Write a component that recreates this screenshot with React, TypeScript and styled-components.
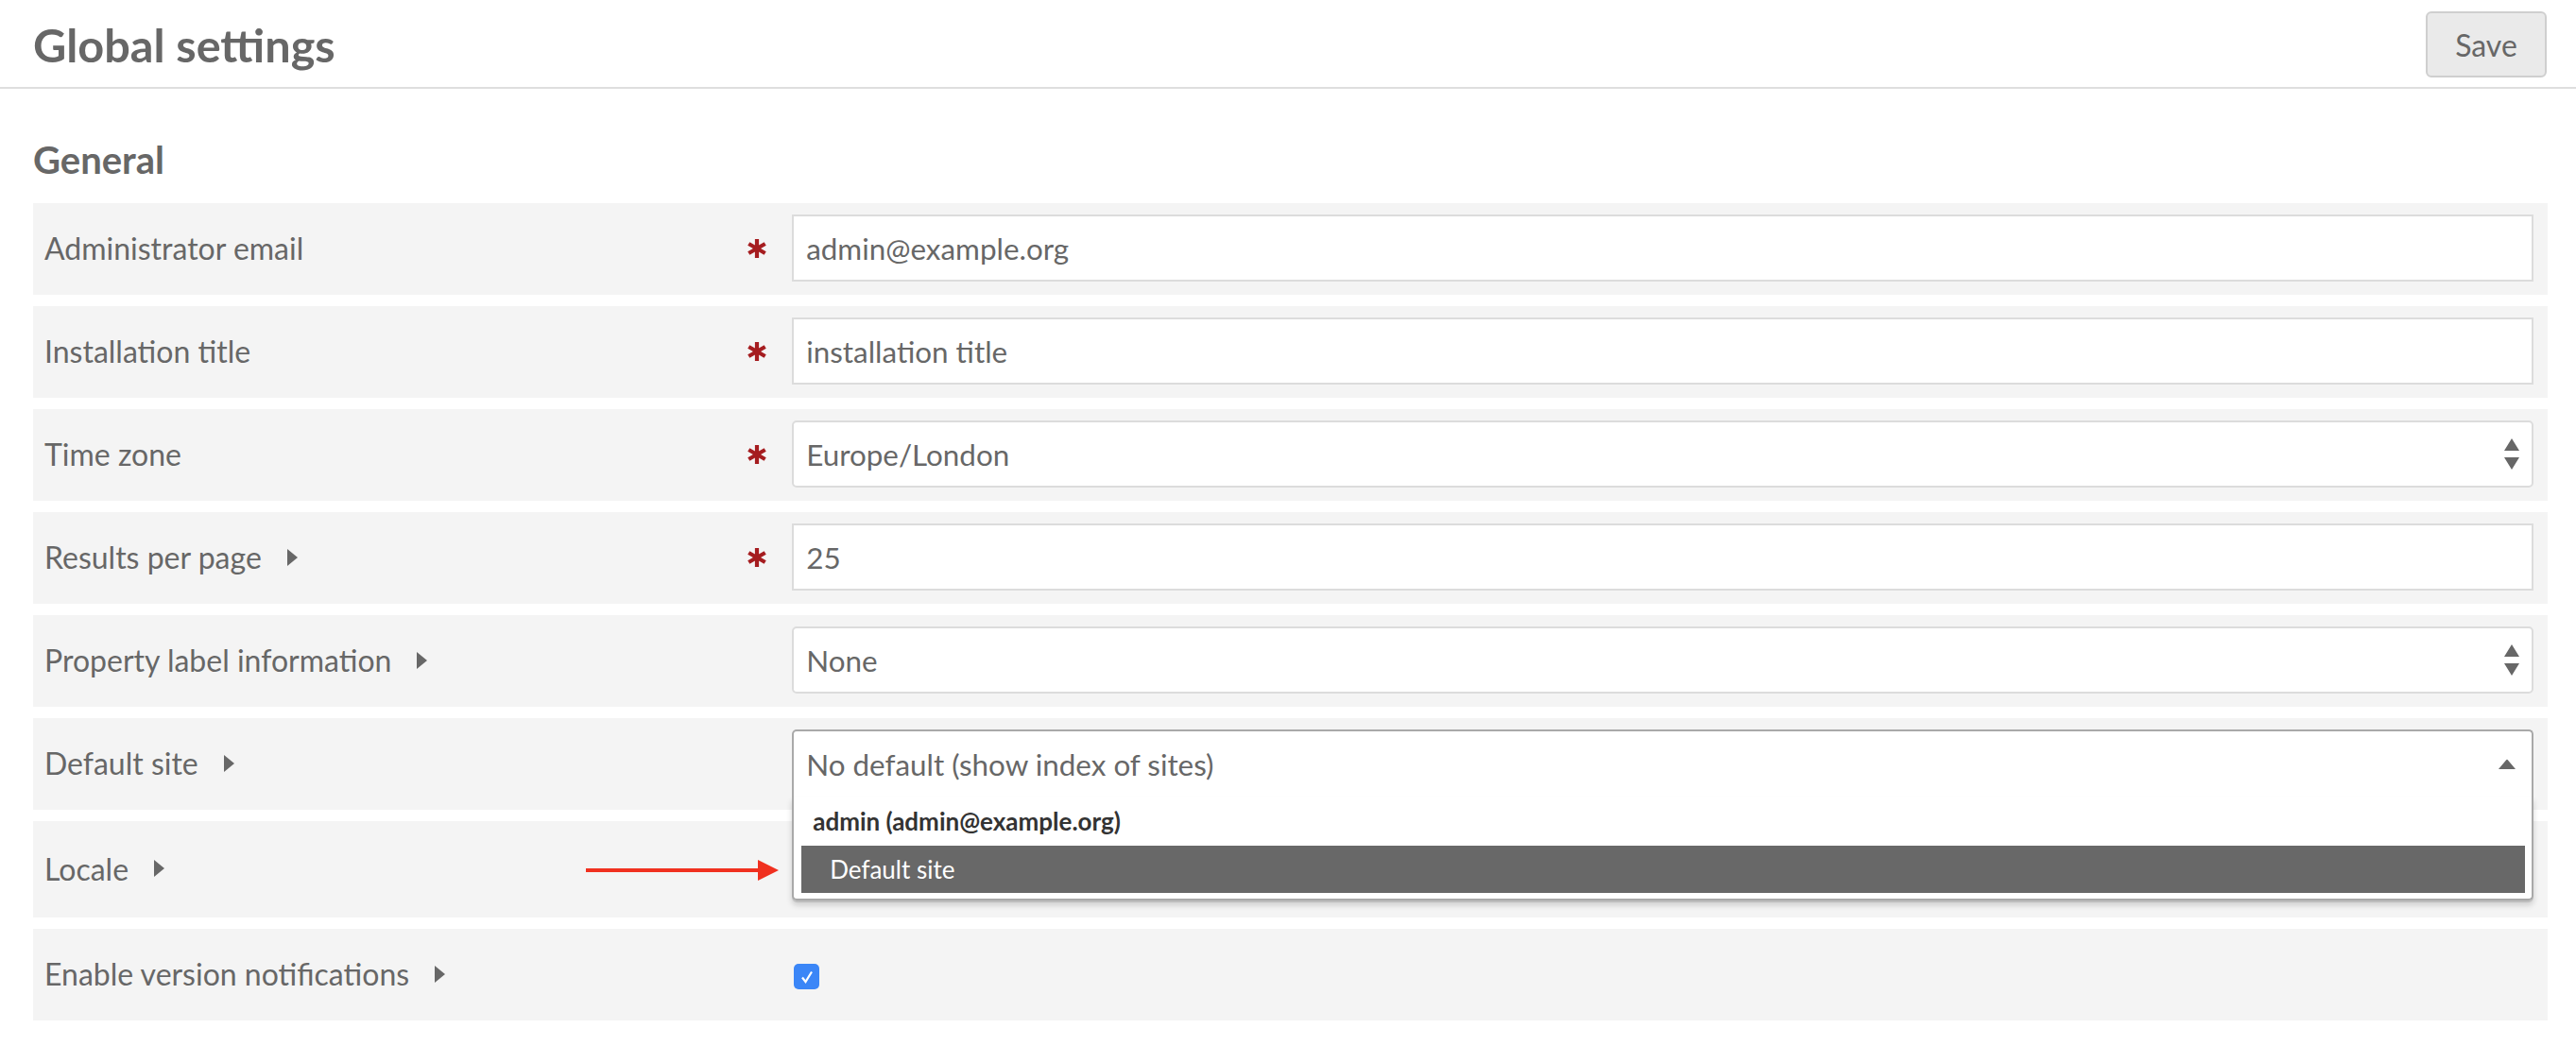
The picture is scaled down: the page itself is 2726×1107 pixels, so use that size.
import styled, { createGlobalStyle } from "styled-components"

const GlobalStyle = createGlobalStyle`
  html, body {
    margin: 0;
    padding: 0;
    background: #fff;
  }
  body {
    font-family: Lato, "Open Sans", "Liberation Sans", sans-serif;
    color: #676767;
  }
  * {
    box-sizing: border-box;
  }
`

// Header
const Header = styled.header`
  display: flex;
  align-items: center;
  justify-content: space-between;
  height: 94px;
  padding: 2px 31px 0 35px;
  border-bottom: 2px solid #dedede;
`
const Title = styled.h1`
  margin: 0;
  font-size: 48.6px;
  line-height: 1;
  font-weight: 700;
  color: #676767;
`
const SaveButton = styled.button`
  width: 128px;
  height: 70px;
  border: 2px solid #cfcfcf;
  border-radius: 6px;
  background: #eaeaea;
  color: #676767;
  font-family: inherit;
  font-size: 32px;
  cursor: pointer;
`

// Form
const Main = styled.main`
  padding: 0 30px 30px 35px;
`
const SectionTitle = styled.h2`
  margin: 55px 0 26px;
  font-size: 40px;
  line-height: 1;
  font-weight: 700;
  color: #676767;
`
const Field = styled.div<{ $tall?: boolean }>`
  position: relative;
  display: flex;
  align-items: center;
  min-height: ${p => (p.$tall ? 102 : 97)}px;
  margin-bottom: 12px;
  padding: 12px 15px 14px 12px;
  background: #f4f4f4;
`
const Meta = styled.div`
  flex: none;
  width: calc(30% + 1px);
  display: flex;
  align-items: center;
  padding-right: 26px;
`
const Label = styled.label`
  font-size: 32px;
  color: #676767;
`
const InfoCaret = styled.svg`
  margin-left: 27px;
  flex: none;
`
const Required = styled.svg`
  margin-left: auto;
  flex: none;
`
const Inputs = styled.div`
  flex: 1;
  position: relative;
`
const TextInput = styled.input`
  display: block;
  width: 100%;
  height: 71px;
  padding: 0 13px;
  border: 2px solid #dcdcdc;
  border-radius: 0;
  background: #fff;
  color: #676767;
  font-family: inherit;
  font-size: 31.4px;
  outline: none;
`
const SelectBox = styled.div<{ $open?: boolean }>`
  display: flex;
  align-items: center;
  justify-content: space-between;
  height: 71px;
  padding: 0 ${p => (p.$open ? 17 : 13)}px 0 13px;
  border: 2px solid ${p => (p.$open ? "#a9a9a9" : "#dcdcdc")};
  border-bottom-width: ${p => (p.$open ? 0 : 2)}px;
  border-radius: ${p => (p.$open ? "5px 5px 0 0" : "5px")};
  background: #fff;
  font-size: 31.4px;
  color: #676767;
`
const DropList = styled.div`
  position: absolute;
  top: 100%;
  left: 0;
  right: 0;
  z-index: 5;
  padding: 0 7px 6px 8px;
  background: #fff;
  border: 2px solid #a9a9a9;
  border-top: 0;
  border-radius: 0 0 5px 5px;
  box-shadow: 0 5px 6px rgba(0, 0, 0, 0.16);
`
const GroupLabel = styled.div`
  height: 52px;
  display: flex;
  align-items: center;
  padding-left: 12px;
  font-size: 26px;
  font-weight: 700;
  color: #333;
`
const Option = styled.div<{ $active?: boolean }>`
  height: 50px;
  display: flex;
  align-items: center;
  padding-left: 30px;
  font-size: 26px;
  color: ${p => (p.$active ? "#fff" : "#676767")};
  background: ${p => (p.$active ? "#686868" : "transparent")};
`
const CheckBox = styled.span`
  display: flex;
  align-items: center;
  justify-content: center;
  width: 27px;
  height: 27px;
  margin: 6px 0 0 2px;
  border-radius: 5px;
  background: #3b86f7;
`
const Annotation = styled.svg`
  position: absolute;
  left: 585px;
  top: 41px;
`

const Caret = () => (
  <InfoCaret width="11" height="18" viewBox="0 0 11 18">
    <path d="M0 0 L11 9 L0 18 Z" fill="#676767" />
  </InfoCaret>
)

const Asterisk = () => (
  <Required width="22" height="22" viewBox="-11 -11 22 22">
    <g stroke="#a51c1f" strokeWidth="4.2">
      <line x1="0" y1="-10" x2="0" y2="10" />
      <line x1="-8.7" y1="-5" x2="8.7" y2="5" />
      <line x1="-8.7" y1="5" x2="8.7" y2="-5" />
    </g>
  </Required>
)

const UpDown = () => (
  <svg width="16" height="33" viewBox="0 0 16 33">
    <path d="M0 13 L8 0 L16 13 Z M0 20 L16 20 L8 33 Z" fill="#676767" />
  </svg>
)

const CaretUp = () => (
  <svg width="18" height="11" viewBox="0 0 18 11">
    <path d="M0 11 L8 1.5 Q9 0 10 1.5 L18 11 Z" fill="#676767" />
  </svg>
)

interface IMeta {
  label: string
  required?: boolean
  info?: boolean
}

const FieldMeta: React.FC<IMeta> = ({ label, required, info }) => (
  <Meta>
    <Label>{label}</Label>
    {info && <Caret />}
    {required && <Asterisk />}
  </Meta>
)

const App = () => {
  return (
    <>
      <GlobalStyle />
      <Header>
        <Title>Global settings</Title>
        <SaveButton>Save</SaveButton>
      </Header>
      <Main>
        <SectionTitle>General</SectionTitle>

        <Field>
          <FieldMeta label="Administrator email" required />
          <Inputs>
            <TextInput defaultValue="admin@example.org" />
          </Inputs>
        </Field>

        <Field>
          <FieldMeta label="Installation title" required />
          <Inputs>
            <TextInput defaultValue="installation title" />
          </Inputs>
        </Field>

        <Field>
          <FieldMeta label="Time zone" required />
          <Inputs>
            <SelectBox>
              <span>Europe/London</span>
              <UpDown />
            </SelectBox>
          </Inputs>
        </Field>

        <Field>
          <FieldMeta label="Results per page" required info />
          <Inputs>
            <TextInput defaultValue="25" />
          </Inputs>
        </Field>

        <Field>
          <FieldMeta label="Property label information" info />
          <Inputs>
            <SelectBox>
              <span>None</span>
              <UpDown />
            </SelectBox>
          </Inputs>
        </Field>

        <Field>
          <FieldMeta label="Default site" info />
          <Inputs>
            <SelectBox $open>
              <span>No default (show index of sites)</span>
              <CaretUp />
            </SelectBox>
            <DropList>
              <GroupLabel>admin (admin@example.org)</GroupLabel>
              <Option $active>Default site</Option>
            </DropList>
          </Inputs>
        </Field>

        <Field $tall>
          <FieldMeta label="Locale" info />
          <Inputs>
            {/* hidden under the open dropdown above */}
            <SelectBox>
              <span />
              <UpDown />
            </SelectBox>
          </Inputs>
          <Annotation width="204" height="22" viewBox="0 0 204 22">
            <rect x="0" y="9" width="184" height="4" fill="#f0301f" />
            <path d="M182 0 L204 11 L182 22 Z" fill="#f0301f" />
          </Annotation>
        </Field>

        <Field>
          <FieldMeta label="Enable version notifications" info />
          <Inputs>
            <CheckBox>
              <svg width="16" height="16" viewBox="0 0 16 16">
                <path d="M3 8.5 L6.5 13 L13 2.5" stroke="#fff" strokeWidth="2.2" fill="none" />
              </svg>
            </CheckBox>
          </Inputs>
        </Field>
      </Main>
    </>
  )
}

export default App
